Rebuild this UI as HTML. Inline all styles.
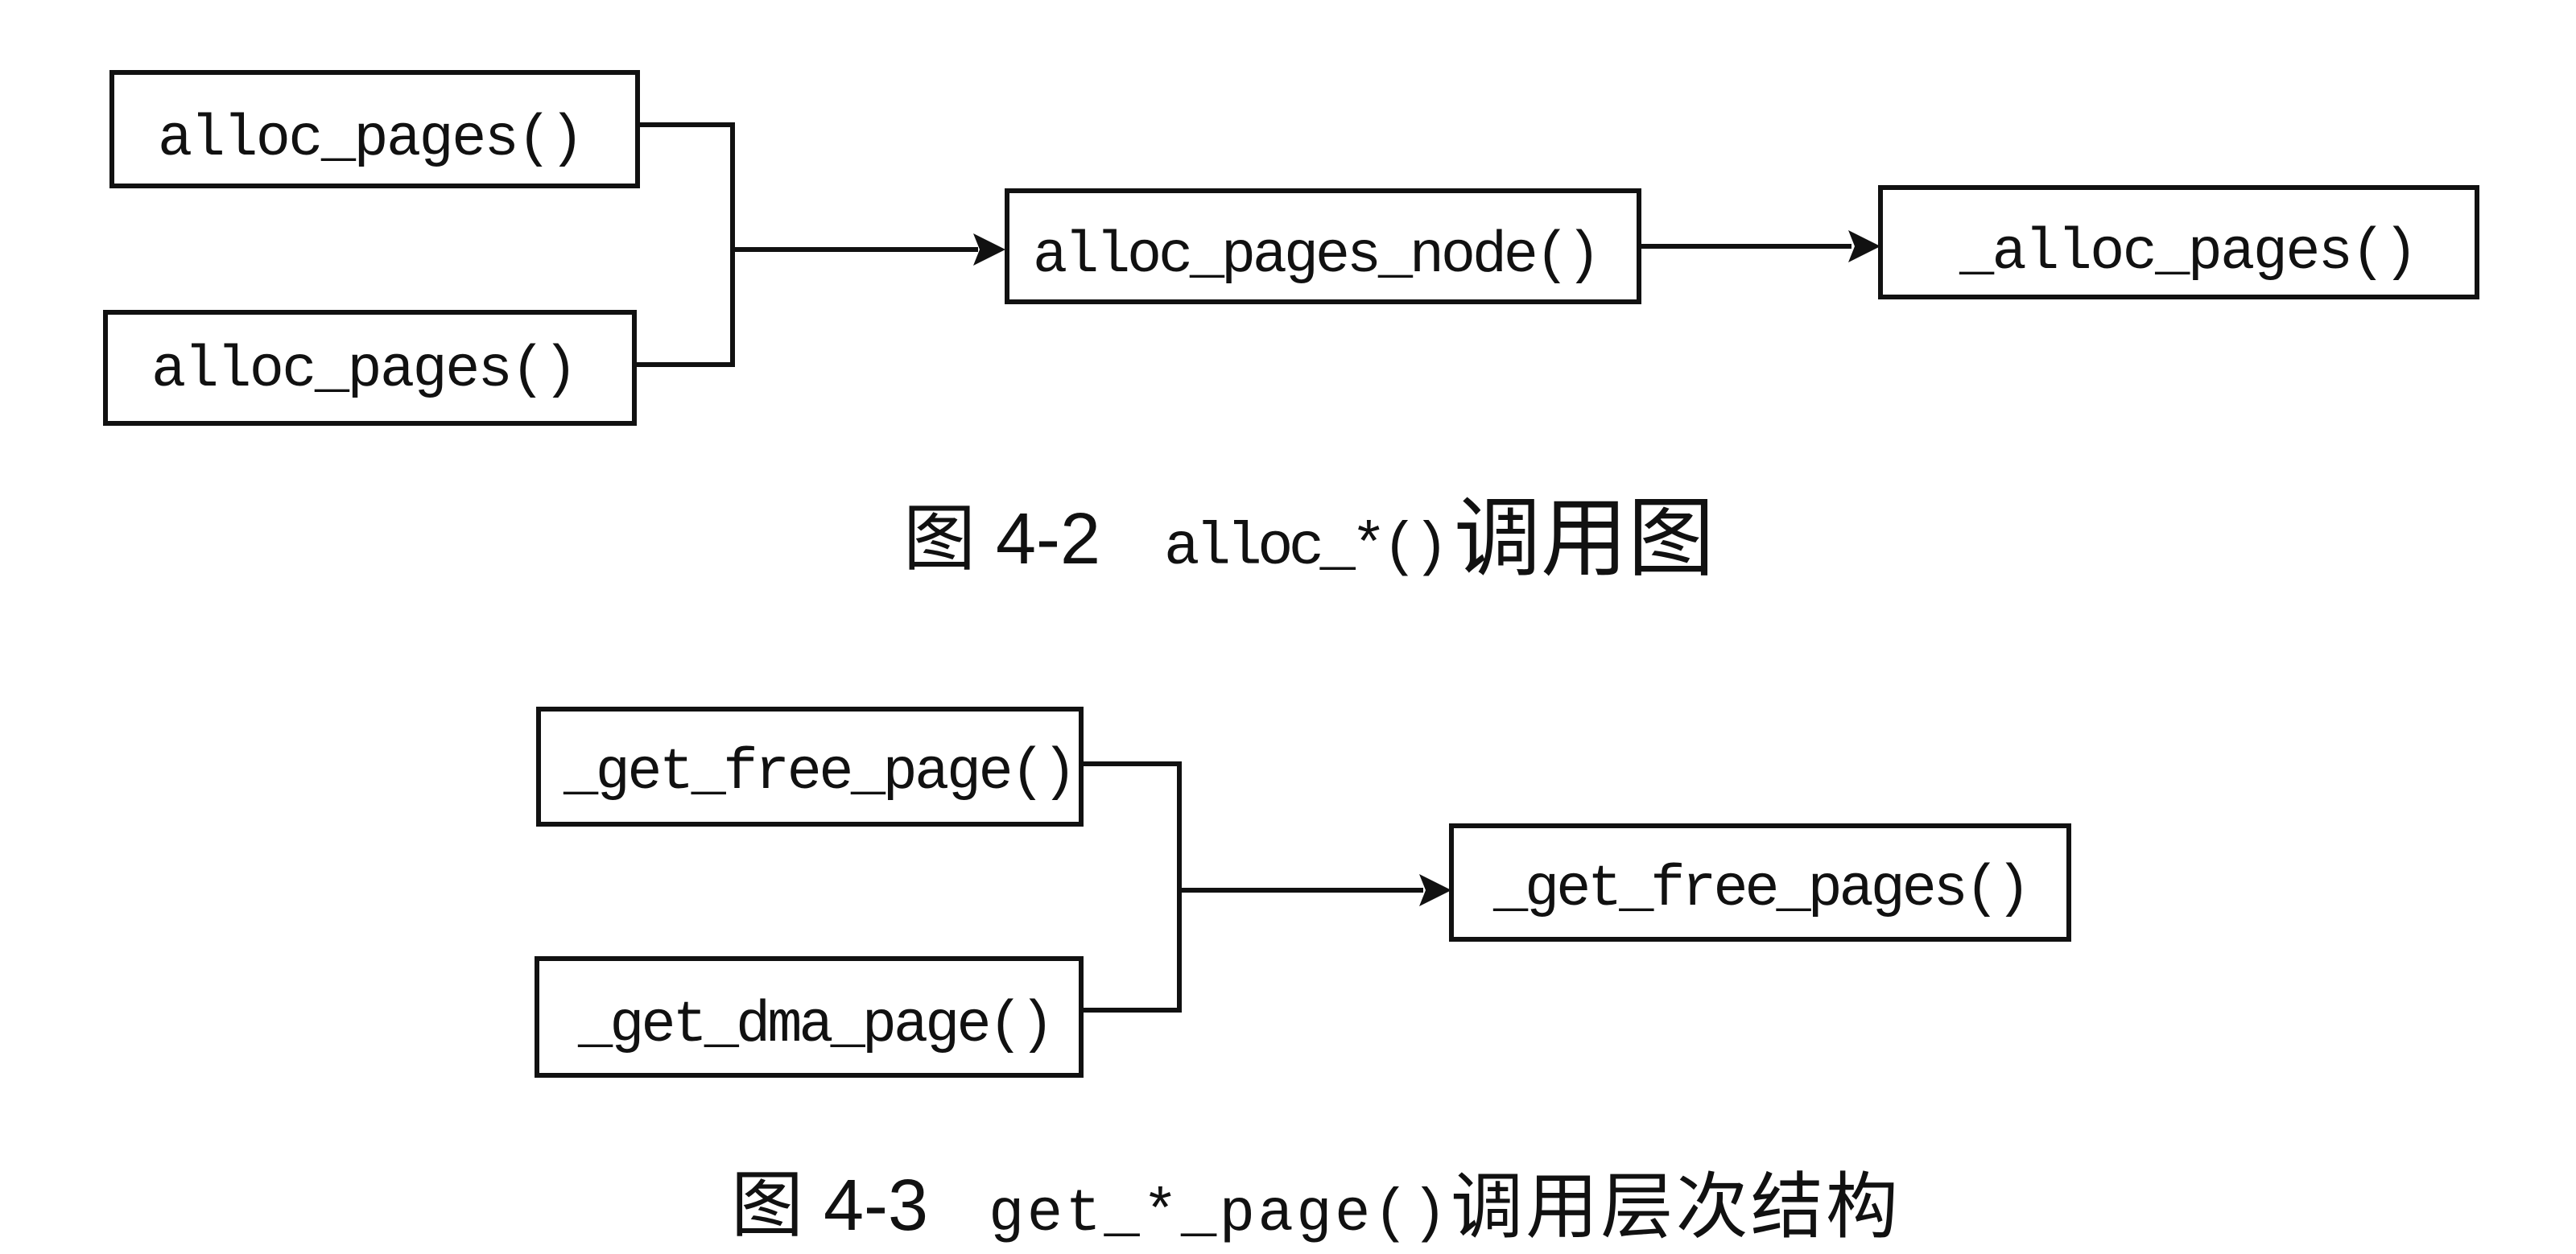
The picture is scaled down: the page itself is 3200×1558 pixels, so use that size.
<!DOCTYPE html>
<html><head><meta charset="utf-8"><style>
html,body{margin:0;padding:0;background:#fff;}
svg{display:block}
.m{font-family:"Liberation Mono",monospace;font-size:72px;fill:#111}
.c{font-family:"Liberation Sans","Noto Sans CJK SC",sans-serif;font-size:90px;fill:#111}
.cm{font-family:"Liberation Mono",monospace;font-size:74px;fill:#111}
</style></head><body>
<svg width="3200" height="1558" viewBox="0 0 3200 1558" xmlns="http://www.w3.org/2000/svg">
<rect width="3200" height="1558" fill="#fff"/>
<g fill="none" stroke="#111" stroke-width="6">
<rect x="139" y="90" width="653" height="141"/>
<rect x="131" y="388" width="657" height="138"/>
<rect x="1251" y="237" width="785" height="138"/>
<rect x="2336" y="233" width="741" height="136"/>
<polyline points="792,155 910,155 910,453 788,453"/>
<line x1="910" y1="310" x2="1215" y2="310"/>
<line x1="2036" y1="306" x2="2300" y2="306"/>
<rect x="669" y="881" width="674" height="143"/>
<rect x="667" y="1191" width="676" height="145"/>
<rect x="1803" y="1026" width="767" height="141"/>
<polyline points="1343,949 1465,949 1465,1255 1343,1255"/>
<line x1="1465" y1="1106" x2="1768" y2="1106"/>
</g>
<g fill="#111">
<polygon points="1249,310 1209,290 1217,310 1209,330"/>
<polygon points="2336,306 2296,286 2304,306 2296,326"/>
<polygon points="1803,1106 1763,1086 1771,1106 1763,1126"/>
</g>
<text class="m" x="196" y="192" textLength="530">alloc_pages()</text>
<text class="m" x="188" y="479" textLength="530">alloc_pages()</text>
<text class="m" x="1283" y="337" textLength="706">alloc_pages_node()</text>
<text class="m" x="2434" y="333" textLength="570">_alloc_pages()</text>
<text class="m" x="700" y="979" textLength="638">_get_free_page()</text>
<text class="m" x="718" y="1293" textLength="592">_get_dma_page()</text>
<text class="m" x="1855" y="1124" textLength="668">_get_free_pages()</text>
<text class="c" x="1122" y="700">图 4-2</text>
<text class="cm" x="1446" y="700" textLength="354">alloc_*()</text>
<text class="c" x="1806" y="706" style="font-size:108px">调用图</text>
<text class="c" x="908" y="1528">图 4-3</text>
<text class="cm" x="1228" y="1528" textLength="570">get_*_page()</text>
<text class="c" x="1802" y="1530" textLength="556">调用层次结构</text>
</svg>
</body></html>
